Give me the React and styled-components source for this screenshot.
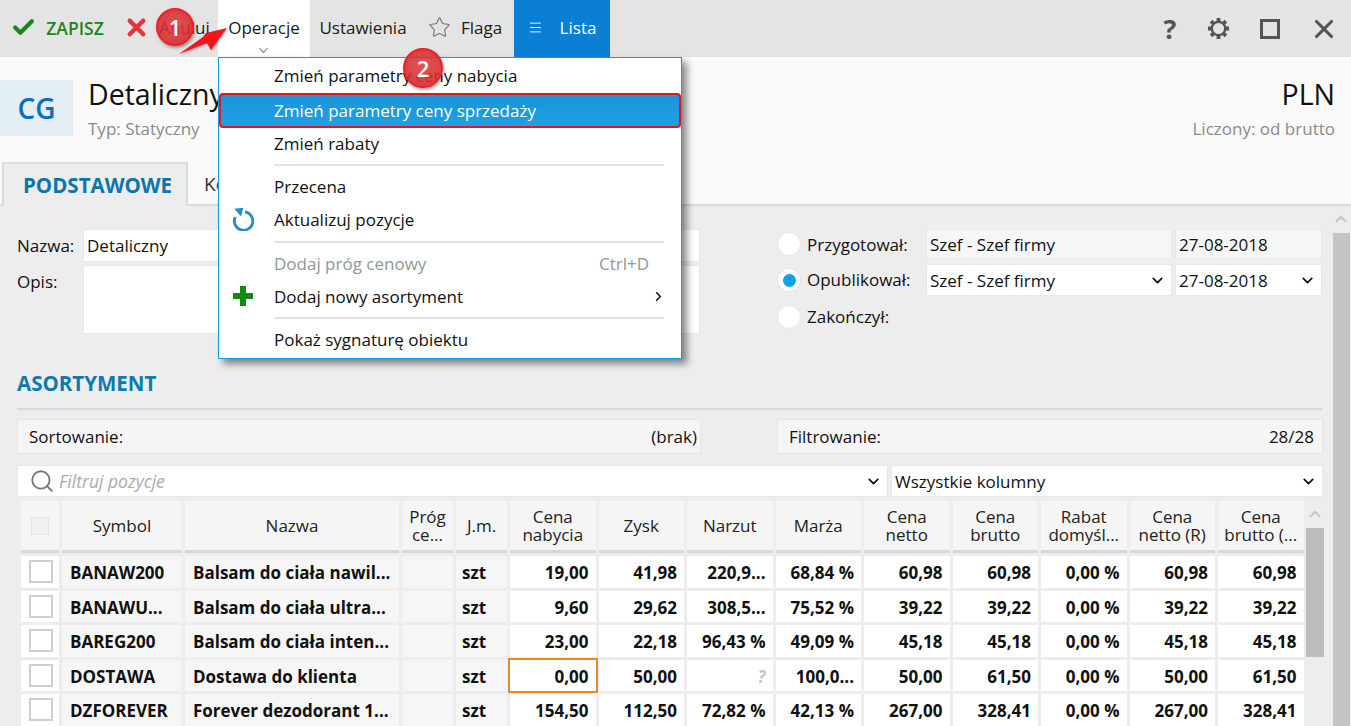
import React from 'react'
import styled, { createGlobalStyle } from 'styled-components'
import { Check, X, Star, Search, ChevronDown, ChevronUp, ChevronRight, Menu as MenuIcon } from 'lucide-react'

const font = '"Open Sans", "Noto Sans", "Liberation Sans", sans-serif'

const GlobalStyle = createGlobalStyle`
  html, body {
    margin: 0;
    height: 100%;
    overflow: hidden;
    background: #ededed;
    font-family: ${font};
    font-size: 17px;
    color: #111;
  }
  * { box-sizing: border-box; }
`

const Page = styled.div`
  position: relative;
  width: 1351px;
  height: 726px;
  overflow: hidden;
`

/* toolbar */
const Toolbar = styled.div`
  display: flex;
  align-items: stretch;
  height: 57px;
  background: #e4e4e4;
`
const ToolItem = styled.div`
  display: flex;
  align-items: center;
  justify-content: center;
  position: relative;
  width: ${p => p.$w}px;
  gap: ${p => p.$gap || 0}px;
  background: ${p => (p.$active ? '#fff' : p.$blue ? '#0a7fd4' : 'transparent')};
  color: ${p => (p.$blue ? '#fff' : p.$green ? '#1c851c' : '#1a1a1a')};
  font-weight: ${p => (p.$green ? 600 : 400)};
  font-size: ${p => (p.$green ? 17.5 : 17)}px;
  padding-bottom: 2px;
`
const Caret = styled.span`
  position: absolute;
  left: 38px;
  bottom: -1px;
  display: flex;
  color: #888;
`
const WindowIcons = styled.div`
  display: flex;
  margin-left: auto;
  color: #555;
`
const WindowSlot = styled.div`
  display: flex;
  align-items: center;
  justify-content: center;
  width: ${p => p.$w}px;
`
const Help = styled.span`
  font-size: 27px;
  font-weight: 700;
`
const Maximize = styled.span`
  width: 20px;
  height: 20px;
  border: 3px solid #555;
`

/* header */
const Header = styled.div`
  display: flex;
  height: 105px;
  padding-top: 23px;
  background: #fafafa;
`
const Badge = styled.div`
  display: flex;
  align-items: center;
  justify-content: center;
  width: 73px;
  height: 56px;
  background: #e4eef5;
  color: #0a70b8;
  font-size: 28px;
  font-weight: 600;
`
const Titles = styled.div`
  padding: 0 0 0 15px;
`
const RightTitles = styled.div`
  margin-left: auto;
  padding-right: 16px;
  text-align: right;
`
const Title = styled.div`
  font-size: 28.5px;
  line-height: 34px;
  margin-top: -3px;
  white-space: nowrap;
`
const Sub = styled.div`
  font-size: 17px;
  color: #8a8a8a;
  line-height: 22px;
  margin-top: 7px;
`

/* tabs */
const Tabs = styled.div`
  display: flex;
  height: 44px;
  padding-left: 2px;
  background: #fafafa;
  border-bottom: 2px solid #dcdcdc;
`
const Tab = styled.div`
  display: flex;
  align-items: center;
  height: 44px;
  padding: 0 0 0 ${p => (p.$active ? 19 : 16)}px;
  width: ${p => (p.$active ? '186px' : 'auto')};
  background: ${p => (p.$active ? '#ededed' : 'transparent')};
  border: ${p => (p.$active ? '2px solid #dcdcdc' : 'none')};
  border-bottom: none;
  color: ${p => (p.$active ? '#0b75ad' : '#333')};
  font-size: ${p => (p.$active ? 20.5 : 19)}px;
  font-weight: ${p => (p.$active ? 700 : 400)};
`

/* content */
const Content = styled.div`
  display: flex;
  height: 520px;
`
const Main = styled.div`
  width: 1323px;
  padding: 23px 0 0 17px;
`
const Rail = styled.div`
  display: flex;
  flex-direction: column;
  align-items: flex-end;
  flex: 1;
  padding: 4px 1px 0 0;
  color: #c9c9c9;
`
const RailThumb = styled.div`
  width: 17px;
  flex: 1;
  margin-top: 5px;
  background: #c4c4c4;
`
const Form = styled.div`
  display: flex;
  justify-content: space-between;
`
const FormLeft = styled.div`
  display: grid;
  grid-template-columns: 66px 1fr;
  grid-template-rows: 33px 69px;
  row-gap: 3px;
  width: 683px;
`
const FormLabel = styled.div`
  font-size: 17px;
  line-height: 33px;
`
const Field = styled.div`
  display: flex;
  align-items: center;
  justify-content: space-between;
  height: 100%;
  padding: 0 5px 0 3px;
  background: ${p => (p.$ro ? '#f6f6f6' : '#fff')};
  border: 1px solid #e8e8e8;
  font-size: 17px;
  white-space: nowrap;
`
const FormRight = styled.div`
  display: grid;
  width: 546px;
  grid-template-columns: 30px 119px 246px 147px;
  grid-template-rows: 30px 32px 32px;
  row-gap: 5px;
`
const Radio = styled.div`
  display: flex;
  align-items: center;
  justify-content: center;
  width: 24px;
  height: 24px;
  align-self: center;
  border-radius: 50%;
  background: #fff;
  border: 1px solid #e6e6e6;
  &::after {
    content: '';
    display: ${p => (p.$on ? 'block' : 'none')};
    width: 13px;
    height: 13px;
    border-radius: 50%;
    background: #0ba5e3;
  }
`
const RadioLabel = styled.div`
  font-size: 17px;
  line-height: 32px;
  white-space: nowrap;
`
const DateField = styled(Field)`
  margin-left: 3px;
  width: 147px;
`
const Section = styled.div`
  height: 39px;
  margin-top: 37px;
  border-bottom: 2px solid #d8d8d8;
  color: #0b7cad;
  font-size: 20.5px;
  font-weight: 700;
  line-height: 24px;
`
const InfoRow = styled.div`
  display: flex;
  justify-content: space-between;
  margin-top: 9px;
`
const InfoBox = styled.div`
  display: flex;
  justify-content: space-between;
  align-items: center;
  width: ${p => p.$w}px;
  height: 35px;
  padding: 0 ${p => p.$pr || 8}px 0 11px;
  background: #f5f5f5;
  border: 1px solid #e6e6e6;
  font-size: 17px;
`
const FilterRow = styled.div`
  display: flex;
  gap: 3px;
  margin-top: 11px;
  height: 32px;
`
const FilterField = styled(Field)`
  width: ${p => p.$w}px;
  padding-left: ${p => p.$pl || 3}px;
  gap: 4px;
`
const Placeholder = styled.span`
  flex: 1;
  color: #aaa;
  font-style: italic;
  font-size: 17.5px;
`

/* table */
const TableWrap = styled.div`
  display: flex;
  gap: 2px;
  margin: 4px 0 0 4px;
`
const Table = styled.div`
  display: grid;
  grid-template-columns: 38px 120px 214px 51px 51px repeat(9, 85.5px);
  grid-auto-rows: 31.5px;
  grid-template-rows: 52px;
  column-gap: 3px;
  row-gap: 3px;
`
const HeadCell = styled.div`
  display: flex;
  align-items: center;
  justify-content: center;
  text-align: center;
  height: 52px;
  background: #f5f5f5;
  border-bottom: 3px solid #d8d8d8;
  font-size: 17px;
  line-height: 18px;
  white-space: pre-line;
  color: #222;
`
const Cell = styled.div`
  display: flex;
  align-items: center;
  justify-content: ${p => (p.$num ? 'flex-end' : 'flex-start')};
  padding: 2px 7px 0 ${p => p.$pl || 8}px;
  background: ${p => (p.$num ? '#fff' : '#f6f6f6')};
  font-size: 17px;
  font-weight: 700;
  white-space: nowrap;
  overflow: hidden;
  ${p => p.$focus && 'outline: 2px solid #f08526; position: relative;'}
`
const CheckCell = styled(Cell)`
  justify-content: center;
  padding: 0 0 0 1px;
  background: #fff;
`
const Box = styled.div`
  width: ${p => (p.$head ? 18 : 24)}px;
  height: ${p => (p.$head ? 18 : 23)}px;
  background: ${p => (p.$head ? '#f1f1f1' : '#fff')};
  border: ${p => (p.$head ? '1px solid #e4e4e4' : '2px solid #cfcfcf')};
`
const Unknown = styled.span`
  color: #c4c4c4;
  font-style: italic;
`
const TableScroll = styled.div`
  display: flex;
  flex-direction: column;
  align-items: center;
  width: 18px;
  padding-top: 4px;
  color: #c9c9c9;
`
const TableThumb = styled.div`
  width: 18px;
  height: 129px;
  margin-top: 5px;
  background: #bdbdbd;
`

/* menu */
const Dropdown = styled.div`
  position: absolute;
  left: 218px;
  top: 57px;
  width: 464px;
  height: 302px;
  padding-top: 1.5px;
  background: #fff;
  border: 1px solid #1b9bdc;
  box-shadow: 5px 5px 7px rgba(0, 0, 0, 0.45);
`
const Item = styled.div`
  display: flex;
  align-items: center;
  justify-content: space-between;
  position: relative;
  height: 33px;
  padding: 0 15px 2px 55px;
  font-size: 17px;
  color: ${p => (p.$off ? '#8f9799' : '#111')};
`
const HotItem = styled(Item)`
  height: 35px;
  padding: 1px 15px 0 53px;
  color: #fff;
  background: linear-gradient(#1a94d6, #1ca2e3);
  border: 2px solid #e8141c;
  border-radius: 4px;
`
const Shortcut = styled.span`
  margin-right: 17px;
`
const ItemIcon = styled.span`
  position: absolute;
  left: 12px;
  top: 3px;
  display: flex;
`
const Separator = styled.div`
  height: 2px;
  margin: ${p => (p.$tall ? 4 : 3)}px 17px 5px 55px;
  background: #e2e2e2;
`
const Numbered = styled.div`
  position: absolute;
  left: ${p => p.$x - p.$r}px;
  top: ${p => p.$y - p.$r}px;
  display: flex;
  align-items: center;
  justify-content: center;
  width: ${p => p.$r * 2}px;
  height: ${p => p.$r * 2}px;
  border-radius: 50%;
  background: radial-gradient(circle at 50% 45%, rgba(224, 58, 58, 0.86), rgba(208, 36, 40, 0.9));
  border: 2px solid #ef2028;
  box-shadow: 1px 2px 3px rgba(0, 0, 0, 0.35);
  color: #fff;
  font-size: 22px;
  font-weight: 600;
`
const Arrow = styled.svg`
  position: absolute;
  left: 176px;
  top: 24px;
  filter: drop-shadow(1px 1px 1px rgba(0, 0, 0, 0.3));
`

const Gear = () => (
  <svg width="23" height="23" viewBox="0 0 24 24" fill="none" stroke="currentColor">
    <circle cx="12" cy="12" r="7" strokeWidth="2.4" />
    {[0, 45, 90, 135].map(a => (
      <path key={a} d="M12 1V23" strokeWidth="4" strokeDasharray="4 14 4" transform={`rotate(${a} 12 12)`} />
    ))}
  </svg>
)

const Refresh = () => (
  <svg width="24" height="24" viewBox="0 0 24 24" fill="none">
    <path d="M14 4.9A9.2 9.2 0 1 1 4.3 10" stroke="#1f8fc4" strokeWidth="2.8" />
    <path d="M3.3 1.8L12.3 0.8L10 9.5Z" fill="#1f8fc4" />
  </svg>
)

const Plus = () => (
  <svg width="24" height="24" viewBox="0 0 24 24">
    <path d="M9 2H15V9H22V15H15V22H9V15H2V9H9Z" fill="#148a14" />
  </svg>
)

const headers = [
  'Symbol', 'Nazwa', 'Próg\nce...', 'J.m.', 'Cena\nnabycia', 'Zysk', 'Narzut', 'Marża',
  'Cena\nnetto', 'Cena\nbrutto', 'Rabat\ndomyśl...', 'Cena\nnetto (R)', 'Cena\nbrutto (...',
]

const rows = [
  ['BANAW200', 'Balsam do ciała nawil...', '19,00', '41,98', '220,9...', '68,84 %', '60,98', '60,98', '0,00 %', '60,98', '60,98'],
  ['BANAWU...', 'Balsam do ciała ultra...', '9,60', '29,62', '308,5...', '75,52 %', '39,22', '39,22', '0,00 %', '39,22', '39,22'],
  ['BAREG200', 'Balsam do ciała inten...', '23,00', '22,18', '96,43 %', '49,09 %', '45,18', '45,18', '0,00 %', '45,18', '45,18'],
  ['DOSTAWA', 'Dostawa do klienta', '0,00', '50,00', '?', '100,0...', '50,00', '61,50', '0,00 %', '50,00', '61,50'],
  ['DZFOREVER', 'Forever dezodorant 1...', '154,50', '112,50', '72,82 %', '42,13 %', '267,00', '328,41', '0,00 %', '267,00', '328,41'],
]

export default function App() {
  return (
    <Page>
      <GlobalStyle />
      <Toolbar>
        <ToolItem $w={115} $gap={10} $green>
          <Check size={25} strokeWidth={4} color="#1c851c" />
          ZAPISZ
        </ToolItem>
        <ToolItem $w={103} $gap={9}>
          <X size={27} strokeWidth={4} color="#e2343a" />
          Anuluj
        </ToolItem>
        <ToolItem $w={92} $active>
          Operacje
          <Caret>
            <ChevronDown size={15} />
          </Caret>
        </ToolItem>
        <ToolItem $w={106}>Ustawienia</ToolItem>
        <ToolItem $w={98} $gap={10}>
          <Star size={23} strokeWidth={1.2} color="#777" />
          Flaga
        </ToolItem>
        <ToolItem $w={96} $blue $gap={17}>
          <MenuIcon size={15} strokeWidth={1.5} />
          Lista
        </ToolItem>
        <WindowIcons>
          <WindowSlot $w={46}>
            <Help>?</Help>
          </WindowSlot>
          <WindowSlot $w={50}>
            <Gear />
          </WindowSlot>
          <WindowSlot $w={54}>
            <Maximize />
          </WindowSlot>
          <WindowSlot $w={54}>
            <X size={30} strokeWidth={2.5} />
          </WindowSlot>
        </WindowIcons>
      </Toolbar>

      <Header>
        <Badge>CG</Badge>
        <Titles>
          <Title>Detaliczny</Title>
          <Sub>Typ: Statyczny</Sub>
        </Titles>
        <RightTitles>
          <Title>PLN</Title>
          <Sub>Liczony: od brutto</Sub>
        </RightTitles>
      </Header>

      <Tabs>
        <Tab $active>PODSTAWOWE</Tab>
        <Tab>Kontrahenci</Tab>
      </Tabs>

      <Content>
        <Main>
          <Form>
            <FormLeft>
              <FormLabel>Nazwa:</FormLabel>
              <Field>Detaliczny</Field>
              <FormLabel>Opis:</FormLabel>
              <Field />
            </FormLeft>
            <FormRight>
              <Radio />
              <RadioLabel>Przygotował:</RadioLabel>
              <Field $ro>Szef - Szef firmy</Field>
              <DateField $ro>27-08-2018</DateField>
              <Radio $on />
              <RadioLabel>Opublikował:</RadioLabel>
              <Field>
                Szef - Szef firmy
                <ChevronDown size={17} strokeWidth={2.4} />
              </Field>
              <DateField>
                27-08-2018
                <ChevronDown size={17} strokeWidth={2.4} />
              </DateField>
              <Radio />
              <RadioLabel>Zakończył:</RadioLabel>
            </FormRight>
          </Form>

          <Section>ASORTYMENT</Section>

          <InfoRow>
            <InfoBox $w={684} $pr={3}>
              <span>Sortowanie:</span>
              <span>(brak)</span>
            </InfoBox>
            <InfoBox $w={546}>
              <span>Filtrowanie:</span>
              <span>28/28</span>
            </InfoBox>
          </InfoRow>

          <FilterRow>
            <FilterField $w={871} $pl={11}>
              <Search size={26} strokeWidth={1.7} color="#777" />
              <Placeholder>Filtruj pozycje</Placeholder>
              <ChevronDown size={17} strokeWidth={2.4} />
            </FilterField>
            <FilterField $w={432}>
              Wszystkie kolumny
              <ChevronDown size={17} strokeWidth={2.4} />
            </FilterField>
          </FilterRow>

          <TableWrap>
            <Table>
              <HeadCell>
                <Box $head />
              </HeadCell>
              {headers.map(h => (
                <HeadCell key={h}>{h}</HeadCell>
              ))}
              {rows.map(r => (
                <React.Fragment key={r[0]}>
                  <CheckCell>
                    <Box />
                  </CheckCell>
                  <Cell>{r[0]}</Cell>
                  <Cell>{r[1]}</Cell>
                  <Cell />
                  <Cell $pl={6}>szt</Cell>
                  {r.slice(2).map((v, i) => (
                    <Cell key={i} $num $focus={r[0] === 'DOSTAWA' && i === 0}>
                      {v === '?' ? <Unknown>?</Unknown> : v}
                    </Cell>
                  ))}
                </React.Fragment>
              ))}
            </Table>
            <TableScroll>
              <ChevronUp size={18} strokeWidth={3} />
              <TableThumb />
            </TableScroll>
          </TableWrap>
        </Main>
        <Rail>
          <ChevronUp size={18} strokeWidth={3} />
          <RailThumb />
        </Rail>
      </Content>

      <Dropdown>
        <Item>Zmień parametry ceny nabycia</Item>
        <HotItem>Zmień parametry ceny sprzedaży</HotItem>
        <Item>Zmień rabaty</Item>
        <Separator />
        <Item>Przecena</Item>
        <Item>
          <ItemIcon>
            <Refresh />
          </ItemIcon>
          Aktualizuj pozycje
        </Item>
        <Separator $tall />
        <Item $off>
          Dodaj próg cenowy
          <Shortcut>Ctrl+D</Shortcut>
        </Item>
        <Item>
          <ItemIcon>
            <Plus />
          </ItemIcon>
          Dodaj nowy asortyment
          <ChevronRight size={15} strokeWidth={2.5} />
        </Item>
        <Separator />
        <Item>Pokaż sygnaturę obiektu</Item>
      </Dropdown>

      <Numbered $x={175} $y={27} $r={19}>1</Numbered>
      <Numbered $x={423} $y={68} $r={20}>2</Numbered>
      <Arrow width="56" height="34" viewBox="0 0 56 34">
        <path d="M51 4L35 26L31 19L3 30L27 13L30 9Z" fill="#f4141c" />
      </Arrow>
    </Page>
  )
}
